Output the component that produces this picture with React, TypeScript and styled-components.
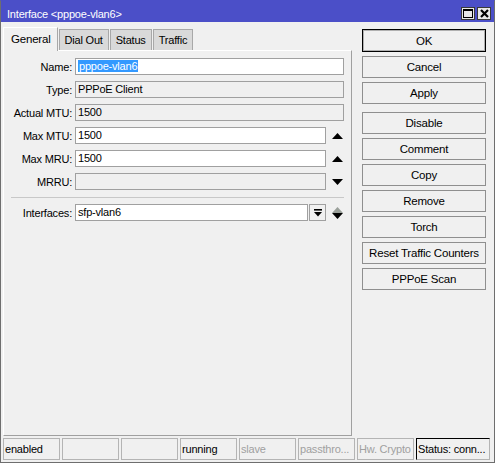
import styled, { createGlobalStyle } from 'styled-components'

const GlobalStyle = createGlobalStyle`
  html, body {
    margin: 0;
    padding: 0;
    background: #f0f0f0;
  }
  body {
    font-family: 'Liberation Sans', Arial, sans-serif;
    font-size: 11px;
    letter-spacing: -0.2px;
    color: #000;
  }
  * {
    box-sizing: border-box;
  }
`

const Window = styled.div`
  width: 495px;
  height: 463px;
  display: flex;
  flex-direction: column;
  background: #f0f0f0;
  border: 1px solid #6e6e6e;
  border-top-color: #4b4fc8;
`

const TitleBar = styled.div`
  height: 21px;
  flex: none;
  display: flex;
  align-items: center;
  padding: 4px 3px 0 6px;
  background: #4b4fc8;
  color: #fff;
  font-size: 11px;
`

const TitleText = styled.span`
  flex: 1;
  white-space: nowrap;
`

const TitleButtons = styled.div`
  display: flex;
  gap: 2px;
`

const TitleButton = styled.div`
  width: 14px;
  height: 13px;
  display: flex;
  align-items: center;
  justify-content: center;
  background: #e8e8e8;
  border: 1px solid #3a3a3a;
`

const Main = styled.div`
  flex: 1;
  display: flex;
  padding-top: 5px;
  min-height: 0;
`

const LeftCol = styled.div`
  width: 349px;
  margin-left: 2px;
  display: flex;
  flex-direction: column;
`

const TabRow = styled.div`
  height: 23px;
  display: flex;
  align-items: flex-end;
`

const Tab = styled.div<{ $active?: boolean }>`
  height: ${(p) => (p.$active ? '24px' : '21px')};
  padding: ${(p) => (p.$active ? '0 6px 1px 7px' : '0 5px')};
  margin-right: 1px;
  margin-bottom: ${(p) => (p.$active ? '-1px' : '0')};
  display: flex;
  align-items: center;
  background: ${(p) => (p.$active ? '#f0f0f0' : '#d9d9d9')};
  border: 1px solid #a8a8a8;
  border-top-color: ${(p) => (p.$active ? '#ffffff' : '#a8a8a8')};
  border-left-color: ${(p) => (p.$active ? '#ffffff' : '#a8a8a8')};
  border-bottom: none;
  position: relative;
  z-index: ${(p) => (p.$active ? 1 : 0)};
  font-size: ${(p) => (p.$active ? '11.5px' : '11px')};
  white-space: nowrap;
`

const Panel = styled.div`
  flex: 1;
  display: flex;
  flex-direction: column;
  gap: 6px;
  padding: 7px 7px 0 0;
  border: 1px solid #a0a0a0;
  border-top-color: #ffffff;
  border-left-color: #ffffff;
`

const Row = styled.div`
  height: 17px;
  display: flex;
  align-items: center;
`

const Label = styled.div`
  width: 71px;
  flex: none;
  padding-right: 3px;
  text-align: right;
  white-space: nowrap;
`

const Field = styled.div<{ $readOnly?: boolean }>`
  flex: 1;
  height: 17px;
  padding-left: 2px;
  line-height: 15px;
  white-space: nowrap;
  overflow: hidden;
  background: ${(p) => (p.$readOnly ? '#f0f0f0' : '#ffffff')};
  border: 1px solid #a0a0a0;
`

const Selected = styled.span`
  background: #3399ff;
  color: #fff;
  padding: 0 1px;
`

const SpinSlot = styled.div`
  width: 18px;
  flex: none;
  display: flex;
  flex-direction: column;
  align-items: flex-end;
  justify-content: center;
  padding-right: 1px;
`

const DropButton = styled.div`
  width: 17px;
  height: 17px;
  flex: none;
  margin-left: 1px;
  display: flex;
  align-items: center;
  justify-content: center;
  background: #f0f0f0;
  border: 1px solid #a0a0a0;
`

const Separator = styled.div`
  height: 1px;
  margin: 1px 0 0 7px;
  background: #c8c8c8;
`

const ButtonCol = styled.div`
  width: 124px;
  margin: 2px 0 0 10px;
  display: flex;
  flex-direction: column;
`

const Button = styled.div<{ $default?: boolean; $gap?: number }>`
  height: ${(p) => (p.$default ? '23px' : '22px')};
  margin-top: ${(p) => p.$gap ?? 4}px;
  display: flex;
  align-items: center;
  justify-content: center;
  background: #f0f0f0;
  border: 1px solid ${(p) => (p.$default ? '#000000' : '#8f8f8f')};
  box-shadow: ${(p) => (p.$default ? 'inset 0 0 0 1px #b0b0b0' : 'none')};
  white-space: nowrap;
  font-size: 11.5px;
`

const StatusBar = styled.div`
  height: 26px;
  flex: none;
  display: flex;
  gap: 2px;
  padding: 2px 3px 2px 2px;
`

const StatusCell = styled.div<{ $muted?: boolean; $strong?: boolean; $width?: number }>`
  width: ${(p) => p.$width ?? 57}px;
  height: 22px;
  flex: none;
  padding-left: 1px;
  line-height: 20px;
  white-space: nowrap;
  overflow: hidden;
  color: ${(p) => (p.$muted ? '#a0a0a0' : '#000')};
  border: 1px solid #b4b4b4;
  border-top-color: ${(p) => (p.$strong ? '#000' : '#b4b4b4')};
  border-left-color: ${(p) => (p.$strong ? '#000' : '#b4b4b4')};
  font-size: 11px;
`

const Up = ({ color = '#000' }: { color?: string }) => (
  <svg width="11" height="6" viewBox="0 0 11 6">
    <polygon points="0,6 5.5,0 11,6" fill={color} />
  </svg>
)

const Down = ({ color = '#000' }: { color?: string }) => (
  <svg width="11" height="6" viewBox="0 0 11 6">
    <polygon points="0,0 11,0 5.5,6" fill={color} />
  </svg>
)

const DropIcon = () => (
  <svg width="8" height="8" viewBox="0 0 8 8">
    <rect x="0" y="0" width="8" height="1.6" fill="#000" />
    <polygon points="0,3 8,3 4,7.5" fill="#000" />
  </svg>
)

const MaxIcon = () => (
  <svg width="10" height="9" viewBox="0 0 10 9">
    <rect x="0.5" y="0.5" width="9" height="8" fill="none" stroke="#000" />
    <rect x="0" y="0" width="10" height="2" fill="#000" />
  </svg>
)

const CloseIcon = () => (
  <svg width="9" height="9" viewBox="0 0 9 9">
    <path d="M1 1 L8 8 M8 1 L1 8" stroke="#000" strokeWidth="2.2" />
  </svg>
)

const actions: { label: string; gap?: number }[] = [
  { label: 'Cancel' },
  { label: 'Apply' },
  { label: 'Disable', gap: 8 },
  { label: 'Comment' },
  { label: 'Copy' },
  { label: 'Remove' },
  { label: 'Torch' },
  { label: 'Reset Traffic Counters' },
  { label: 'PPPoE Scan' },
]

const statusCells: { text: string; muted?: boolean }[] = [
  { text: 'enabled' },
  { text: '' },
  { text: '' },
  { text: 'running' },
  { text: 'slave', muted: true },
  { text: 'passthro...', muted: true },
  { text: 'Hw. Crypto', muted: true },
]

export default function App() {
  return (
    <>
      <GlobalStyle />
      <Window>
        <TitleBar>
          <TitleText>Interface &lt;pppoe-vlan6&gt;</TitleText>
          <TitleButtons>
            <TitleButton>
              <MaxIcon />
            </TitleButton>
            <TitleButton>
              <CloseIcon />
            </TitleButton>
          </TitleButtons>
        </TitleBar>
        <Main>
          <LeftCol>
            <TabRow>
              <Tab $active>General</Tab>
              <Tab>Dial Out</Tab>
              <Tab>Status</Tab>
              <Tab>Traffic</Tab>
            </TabRow>
            <Panel>
              <Row>
                <Label>Name:</Label>
                <Field>
                  <Selected>pppoe-vlan6</Selected>
                </Field>
              </Row>
              <Row>
                <Label>Type:</Label>
                <Field $readOnly>PPPoE Client</Field>
              </Row>
              <Row>
                <Label>Actual MTU:</Label>
                <Field $readOnly>1500</Field>
              </Row>
              <Row>
                <Label>Max MTU:</Label>
                <Field>1500</Field>
                <SpinSlot>
                  <Up />
                </SpinSlot>
              </Row>
              <Row>
                <Label>Max MRU:</Label>
                <Field>1500</Field>
                <SpinSlot>
                  <Up />
                </SpinSlot>
              </Row>
              <Row>
                <Label>MRRU:</Label>
                <Field $readOnly />
                <SpinSlot>
                  <Down />
                </SpinSlot>
              </Row>
              <Separator />
              <Row>
                <Label>Interfaces:</Label>
                <Field>sfp-vlan6</Field>
                <DropButton>
                  <DropIcon />
                </DropButton>
                <SpinSlot>
                  <Up color="#9aa09a" />
                  <Down />
                </SpinSlot>
              </Row>
            </Panel>
          </LeftCol>
          <ButtonCol>
            <Button $default $gap={0}>
              OK
            </Button>
            {actions.map((a) => (
              <Button key={a.label} $gap={a.gap}>
                {a.label}
              </Button>
            ))}
          </ButtonCol>
        </Main>
        <StatusBar>
          {statusCells.map((c, i) => (
            <StatusCell key={i} $muted={c.muted}>
              {c.text}
            </StatusCell>
          ))}
          <StatusCell $strong $width={74}>
            Status: conn...
          </StatusCell>
        </StatusBar>
      </Window>
    </>
  )
}
